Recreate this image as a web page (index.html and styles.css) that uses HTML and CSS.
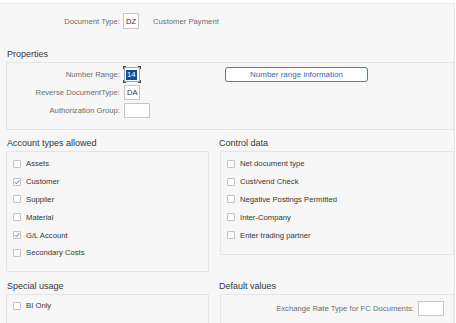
FILE: index.html
```html
<!DOCTYPE html>
<html>
<head>
    <title>Document Type Details</title>
    <link rel="stylesheet" href="styles.css">
</head>
<body>
    <div class="page">
        <div class="doc-row">
            <span class="doc-label">Document Type:</span>
            <span class="field small">DZ</span>
            <span class="doc-text">Customer Payment</span>
        </div>

        <div class="group">
            <h2>Properties</h2>
            <div class="box props">
                <span class="label">Number Range:</span>
                <span class="focus"><span class="field small"><span class="selected">14</span></span></span>
                <button class="button">Number range information</button>

                <span class="label">Reverse DocumentType:</span>
                <span class="field small">DA</span>
                <span></span>

                <span class="label">Authorization Group:</span>
                <span class="field wide"></span>
                <span></span>
            </div>
        </div>

        <div class="columns">
            <div class="group">
                <h2>Account types allowed</h2>
                <div class="box checks account">
                    <div class="check"><span class="checkbox"></span>Assets</div>
                    <div class="check"><span class="checkbox checked"><svg viewBox="0 0 8 8"><polyline points="1.8,4.2 3.3,5.7 6.3,2.2"/></svg></span>Customer</div>
                    <div class="check"><span class="checkbox"></span>Supplier</div>
                    <div class="check"><span class="checkbox"></span>Material</div>
                    <div class="check"><span class="checkbox checked"><svg viewBox="0 0 8 8"><polyline points="1.8,4.2 3.3,5.7 6.3,2.2"/></svg></span>G/L Account</div>
                    <div class="check"><span class="checkbox"></span>Secondary Costs</div>
                </div>
            </div>

            <div class="group right">
                <h2>Control data</h2>
                <div class="box checks control">
                    <div class="check"><span class="checkbox"></span>Net document type</div>
                    <div class="check"><span class="checkbox"></span>Cust/vend Check</div>
                    <div class="check"><span class="checkbox"></span>Negative Postings Permitted</div>
                    <div class="check"><span class="checkbox"></span>Inter-Company</div>
                    <div class="check"><span class="checkbox"></span>Enter trading partner</div>
                </div>
            </div>

            <div class="group">
                <h2>Special usage</h2>
                <div class="box checks special">
                    <div class="check"><span class="checkbox"></span>BI Only</div>
                </div>
            </div>

            <div class="group right">
                <h2>Default values</h2>
                <div class="box defaults">
                    <span class="label">Exchange Rate Type for FC Documents:</span>
                    <span class="field wide"></span>
                </div>
            </div>
        </div>
    </div>
</body>
</html>
```

FILE: styles.css
```css
body {
    margin: 0;
    background: white;
    font-family: "Liberation Sans", Arial, sans-serif;
    font-size: 7.7px;
    color: #32363a;
    overflow: hidden;
}
.page {
    margin-top: 3px;
    width: 448px;
    height: 330px;
    padding-left: 6px;
    background: #f7f7f7;
    border-top: 1px solid #e6e6e6;
    border-right: 1px solid #e6e6e6;
}
.doc-row {
    display: flex;
    align-items: center;
    margin-left: -6px;
    padding-top: 9px;
    height: 16px;
}
.doc-label {
    width: 120px;
    text-align: right;
    color: #6a6d70;
}
.doc-row .field {
    margin-left: 3px;
    height: 16px;
}
.doc-text {
    margin-left: 14px;
    color: #6a6d70;
}
.group h2 {
    margin: 0 0 2px 1px;
    font-size: 9px;
    font-weight: normal;
    line-height: 12px;
    color: #32363a;
}
.doc-row + .group {
    margin-top: 19px;
}
.box {
    border: 1px solid #e5e5e5;
    background: #f7f7f7;
}
.props {
    display: grid;
    grid-template-columns: 113px 97px 143px;
    grid-auto-rows: 15px;
    column-gap: 4px;
    row-gap: 3px;
    align-items: center;
    padding: 4px 0 11px;
}
.label {
    text-align: right;
    color: #6a6d70;
    white-space: nowrap;
}
.field {
    display: flex;
    align-items: center;
    box-sizing: border-box;
    height: 15px;
    padding-left: 2px;
    background: white;
    border: 1px solid #c6c6c6;
    color: #32363a;
}
.field.small {
    width: 16px;
}
.field.wide {
    width: 26px;
}
.focus {
    position: relative;
    width: 16px;
    height: 15px;
}
.focus::before {
    content: "";
    position: absolute;
    top: -1px;
    left: -1px;
    right: -1px;
    bottom: -1px;
    background:
        linear-gradient(#444, #444) top left / 3px 1px no-repeat,
        linear-gradient(#444, #444) top left / 1px 3px no-repeat,
        linear-gradient(#444, #444) top right / 3px 1px no-repeat,
        linear-gradient(#444, #444) top right / 1px 3px no-repeat,
        linear-gradient(#444, #444) bottom left / 3px 1px no-repeat,
        linear-gradient(#444, #444) bottom left / 1px 3px no-repeat,
        linear-gradient(#444, #444) bottom right / 3px 1px no-repeat,
        linear-gradient(#444, #444) bottom right / 1px 3px no-repeat;
}
.focus .field {
    padding-left: 1px;
    border-color: #9aa6b3;
}
.selected {
    background: #0b4f9c;
    color: white;
    padding: 0 1px;
    line-height: 10px;
}
.button {
    box-sizing: border-box;
    height: 15px;
    padding: 0;
    background: white;
    border: 1px solid #3d7fc4;
    border-radius: 3px;
    color: #2a6ab3;
    font-family: inherit;
    font-size: 8px;
}
.columns {
    display: grid;
    grid-template-columns: 203px 234px;
    column-gap: 11px;
    row-gap: 8px;
    align-items: start;
    margin-top: 7px;
}
.right h2 {
    margin-left: -1px;
}
.checks {
    padding: 3px 0 9px 6px;
}
.control {
    padding-bottom: 10px;
}
.special {
    padding-top: 2px;
    padding-bottom: 9px;
}
.check {
    display: flex;
    align-items: center;
    height: 17.8px;
    white-space: nowrap;
}
.checkbox {
    display: inline-flex;
    box-sizing: border-box;
    width: 8px;
    height: 8px;
    margin-right: 5px;
    background: white;
    border: 1px solid #c3c3c3;
    border-radius: 1px;
}
.checkbox svg {
    width: 8px;
    height: 8px;
    margin: -1px;
    fill: none;
    stroke: #2a6ab3;
    stroke-width: 0.9;
}
.defaults {
    display: flex;
    justify-content: flex-end;
    align-items: center;
    gap: 4px;
    padding: 6px 9px 8px 0;
}
```
